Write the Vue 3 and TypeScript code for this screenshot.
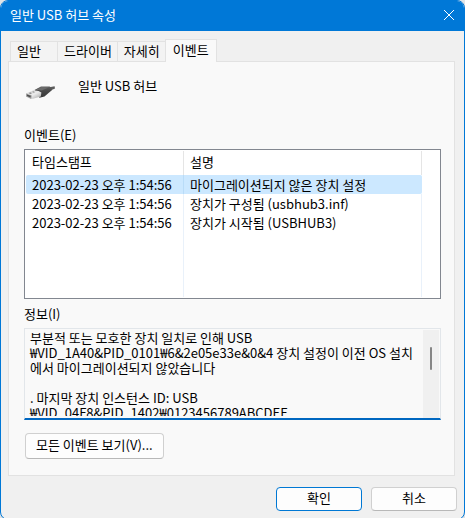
<script setup lang="ts">
import { ref } from 'vue'

interface DeviceEvent {
  time: string
  description: string
}

const tabs: string[] = ['일반', '드라이버', '자세히', '이벤트']
const activeTab = ref('이벤트')

const events: DeviceEvent[] = [
  { time: '2023-02-23 오후 1:54:56', description: '마이그레이션되지 않은 장치 설정' },
  { time: '2023-02-23 오후 1:54:56', description: '장치가 구성됨 (usbhub3.inf)' },
  { time: '2023-02-23 오후 1:54:56', description: '장치가 시작됨 (USBHUB3)' },
]
const selected = ref(0)

const info = [
  '부분적 또는 모호한 장치 일치로 인해 USB',
  '₩VID_1A40&PID_0101₩6&2e05e33e&0&4 장치 설정이 이전 OS 설치',
  '에서 마이그레이션되지 않았습니다',
  '',
  '. 마지막 장치 인스턴스 ID: USB',
  '₩VID_04F8&PID_1402₩0123456789ABCDEF',
].join('\n')
</script>

<template>
  <div class="window">
    <header class="titlebar">
      <h1>일반 USB 허브 속성</h1>
      <button class="close" type="button" aria-label="닫기">
        <svg viewBox="0 0 10 10" width="10" height="10"><path d="M0 0L10 10M10 0L0 10" stroke="#fff" fill="none" /></svg>
      </button>
    </header>
    <main class="body">
      <div class="tabs" role="tablist">
        <button
          v-for="tab in tabs"
          :key="tab"
          type="button"
          role="tab"
          class="tab"
          :class="{ active: tab === activeTab }"
          :aria-selected="tab === activeTab"
          @click="activeTab = tab"
        >{{ tab }}</button>
      </div>
      <section class="panel" role="tabpanel">
        <div class="device">
          <svg class="usb" viewBox="0 0 32 18" width="32" height="18" aria-hidden="true">
            <defs>
              <linearGradient id="metal" x1="0" y1="0" x2="1" y2="1">
                <stop offset="0" stop-color="#c8c8c8" />
                <stop offset="0.5" stop-color="#ececec" />
                <stop offset="1" stop-color="#a0a0a0" />
              </linearGradient>
              <linearGradient id="grip" x1="0" y1="0" x2="0" y2="1">
                <stop offset="0" stop-color="#606060" />
                <stop offset="0.4" stop-color="#484848" />
                <stop offset="1" stop-color="#383838" />
              </linearGradient>
            </defs>
            <path d="M24 3.4L30.6 2.2L31 4.4L26.5 6.4Z" fill="#5c5c5c" />
            <path d="M10.5 6L17 2.6L25.5 2.6L28 3.8L27.5 6.6L20.5 12.4L15.5 13.8Z" fill="url(#grip)" />
            <path d="M11.5 5.8L17.5 3L25 3.2L17.8 6.6Z" fill="#6c6c6c" />
            <path d="M2 9.6L9.5 6.2L14.5 7L17.4 8.6L16.8 12.6L9 14.8L6.6 14.8L2 12.4Z" fill="url(#metal)" />
            <path d="M2 9.6L7.8 11.4L7.2 14.9L2 12.4Z" fill="#a2a2a2" />
            <path d="M3 10.6L6.8 11.8L6.4 13.6L3 12Z" fill="#505050" />
            <path d="M6 8.5L8 9L6.8 9.7L4.8 9.2Z M9.2 7.4L11 7.9L9.9 8.5L8 8.1Z" fill="#707070" />
          </svg>
          <span>일반 USB 허브</span>
        </div>

        <h2 id="events-label" class="label">이벤트(E)</h2>
        <div class="list">
          <table aria-labelledby="events-label">
            <thead>
              <tr><th class="time">타임스탬프</th><th>설명</th></tr>
            </thead>
            <tbody>
              <tr
                v-for="(event, i) in events"
                :key="i"
                :class="{ selected: i === selected }"
                @click="selected = i"
              >
                <td>{{ event.time }}</td>
                <td>{{ event.description }}</td>
              </tr>
              <tr class="filler" aria-hidden="true"><td></td><td></td></tr>
            </tbody>
          </table>
        </div>

        <label class="label info-label" for="info">정보(I)</label>
        <div class="info">
          <textarea id="info" readonly rows="6" :value="info"></textarea>
          <div class="track" aria-hidden="true"><div class="thumb"></div></div>
        </div>

        <button class="button view-all" type="button">모든 이벤트 보기(V)...</button>
      </section>
      <footer class="actions">
        <button class="button primary" type="button">확인</button>
        <button class="button" type="button">취소</button>
      </footer>
    </main>
  </div>
</template>

<style>
body {
  background: #dfe3e6;
}
</style>

<style scoped>
* {
  box-sizing: border-box;
}
.window {
  display: flex;
  flex-direction: column;
  min-height: 100vh;
  overflow: hidden;
  border: 1px solid #0078d7;
  border-radius: 8px;
  background: #f0f0f0;
  color: #000;
  font: 13px/18px "Noto Sans CJK KR", sans-serif;
}
button,
textarea {
  margin: 0;
  color: inherit;
  font: inherit;
}
.titlebar {
  display: flex;
  align-items: center;
  justify-content: space-between;
  height: 30px;
  padding: 0 4px 2px 9px;
  background: #0078d7;
  color: #fff;
}
h1,
h2 {
  margin: 0;
  font: inherit;
}
.close {
  display: flex;
  align-items: center;
  justify-content: center;
  width: 22px;
  height: 22px;
  padding: 0;
  border: 0;
  background: none;
}
.body {
  display: flex;
  flex: 1;
  flex-direction: column;
  padding: 8px 7px 8px 7px;
}
.tabs {
  display: flex;
  align-items: flex-end;
  height: 23px;
  padding-left: 2px;
  margin-bottom: -1px;
}
.tab {
  height: 21px;
  padding: 0 5px 2px 6px;
  border: 1px solid #e2e2e2;
  border-right: 0;
  background: #f3f3f3;
  line-height: 18px;
  text-align: left;
  white-space: nowrap;
}
.tab:first-child {
  min-width: 47px;
}
.tab.active {
  z-index: 1;
  height: 23px;
  padding: 0 7px 3px;
  border-right: 1px solid #e2e2e2;
  border-bottom: 0;
  background: #f9f9f9;
}
.panel {
  flex: 1;
  margin-right: 2px;
  padding: 15px 13px 16px 15px;
  border: 1px solid #e2e2e2;
  background: #f9f9f9;
}
.device {
  display: flex;
  align-items: flex-start;
  gap: 22px;
  height: 49px;
}
.usb {
  margin-top: 7px;
}
.label {
  display: block;
  height: 23px;
}
.list {
  height: 150px;
  padding: 1px 18px 1px 1px;
  border: 1px solid #828790;
  background: #fff;
}
table {
  width: 100%;
  height: 100%;
  border-collapse: separate;
  border-spacing: 0;
  table-layout: fixed;
}
th,
td {
  height: 19px;
  padding: 0 0 0 6px;
  border-right: 1px solid #e9f1fa;
  font-weight: normal;
  line-height: 19px;
  text-align: left;
  white-space: nowrap;
}
th {
  height: 24px;
  padding-bottom: 3px;
  border-color: #e5e5e5;
}
.time {
  width: 158px;
}
.selected td {
  border-color: #b9dcf8;
  background: #cce8ff;
}
.selected td:first-child {
  border-radius: 2px 0 0 2px;
}
.selected td:last-child {
  border-color: #cce8ff;
  border-radius: 0 2px 2px 0;
}
.filler td {
  height: auto;
}
.info-label {
  margin-top: 6px;
}
.info {
  display: flex;
  height: 92px;
  padding: 1px 1px 2px 0;
  border: 1px solid #e2e6ea;
  border-bottom: 2px solid #0067c0;
}
textarea {
  flex: 1;
  min-width: 0;
  padding: 0 0 0 5px;
  border: 0;
  outline: 0;
  background: #f9f9f9;
  line-height: 15px;
  white-space: pre;
  resize: none;
  overflow: hidden;
}
.track {
  width: 16px;
  margin-bottom: -2px;
  padding: 17px 7px 0;
  background: #f0f0f0;
}
.thumb {
  height: 23px;
  border-radius: 1px;
  background: #858585;
}
.button {
  min-width: 86px;
  height: 24px;
  padding: 0 10px 2px;
  border: 1px solid #d0d0d0;
  border-bottom-color: #b8b8b8;
  border-radius: 4px;
  background: #fdfdfd;
  line-height: 20px;
}
.view-all {
  height: 26px;
  margin: 13px 0 0 1px;
}
.actions {
  display: flex;
  justify-content: flex-end;
  gap: 9px;
  padding-top: 11px;
}
.primary {
  border-color: #0078d4;
}
</style>
